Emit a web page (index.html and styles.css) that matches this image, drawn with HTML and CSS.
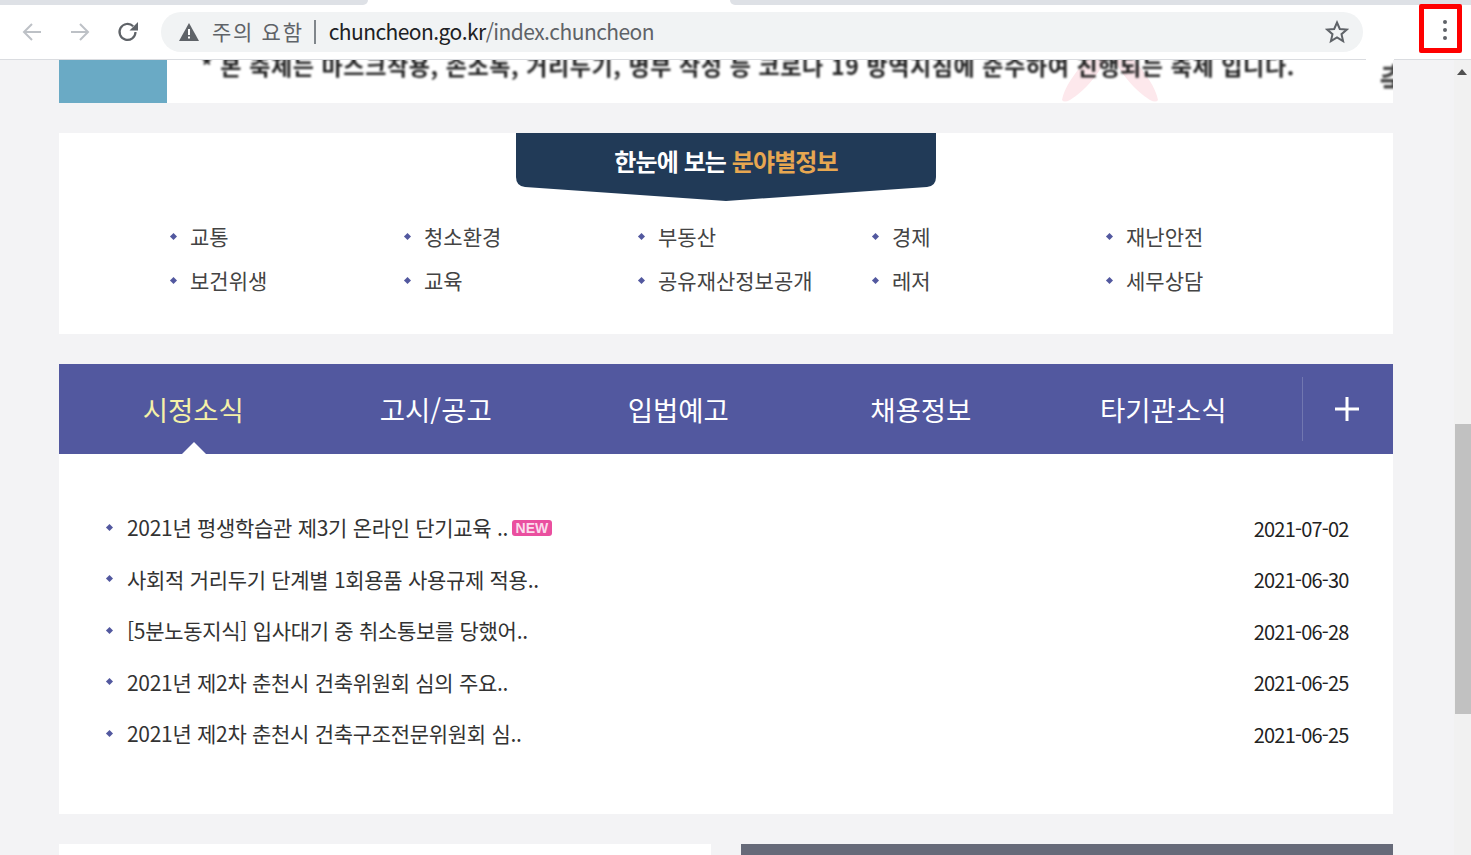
FILE: index.html
```html
<!DOCTYPE html>
<html lang="ko">
<head>
  <meta charset="UTF-8" />
  <title>춘천시청</title>
  <link rel="stylesheet" href="styles.css">
</head>
<body>

  <div class="tabstrip">
    <div class="tab-off tab-left"></div>
    <div class="tab-on"></div>
    <div class="tab-off tab-right"></div>
  </div>

  <div class="toolbar">
    <div class="nav-btn">
      <svg width="24" height="24" viewBox="0 0 24 24"><path d="M21 12H5M12 4l-8 8 8 8" fill="none" stroke="#bdc1c6" stroke-width="2"/></svg>
    </div>
    <div class="nav-btn">
      <svg width="24" height="24" viewBox="0 0 24 24"><path d="M3 12h16M12 4l8 8-8 8" fill="none" stroke="#bdc1c6" stroke-width="2"/></svg>
    </div>
    <div class="nav-btn">
      <svg width="24" height="24" viewBox="0 0 24 24"><path d="M19.500 12a8 8 0 1 1-2.300-5.700" fill="none" stroke="#5f6368" stroke-width="2.200"/><path d="M22 2v8.500h-8.500z" fill="#5f6368"/></svg>
    </div>
    <div class="address">
      <svg class="warn" width="20" height="18" viewBox="0 0 20 18"><path d="M10 0l10 18H0z" fill="#5f6368"/><path d="M9 6h2v6H9zM9 13.500h2v2H9z" fill="#fff"/></svg>
      <span class="warn-text">주의 요함</span>
      <span class="sep"></span>
      <span class="url">chuncheon.go.kr<span class="url-path">/index.chuncheon</span></span>
      <svg class="star" width="24" height="24" viewBox="0 0 24 24"><path d="M12 2.500l2.800 6.500 7 .6-5.300 4.600 1.600 6.900-6.100-3.700-6.100 3.700 1.600-6.900-5.300-4.600 7-.6z" fill="none" stroke="#5f6368" stroke-width="2"/></svg>
    </div>
  </div>

  <div class="menu-mark">
    <i></i><i></i><i></i>
  </div>

  <div class="viewport">
    <div class="page">

      <div class="banner">
        <div class="banner-blue"></div>
        <svg class="banner-ribbon" width="96" height="43" viewBox="0 0 96 43"><path d="M0 40C2 28 12 14 24 0H44C36 14 24 30 8 40Q2 43 0 40ZM96 40C94 28 84 14 72 0H52C60 14 72 30 88 40Q94 43 96 40Z" fill="#fde8ec"/></svg>
        <div class="banner-text">* 본 축제는 마스크착용, 손소독, 거리두기, 명부 작성 등 코로나 19 방역지침에 준수하여 진행되는 축제 입니다.</div>
        <div class="banner-edge">축</div>
      </div>

      <section class="fields">
        <h2 class="fields-title">한눈에 보는 <em>분야별정보</em></h2>
        <ul class="fields-list">
          <li>교통</li>
          <li>청소환경</li>
          <li>부동산</li>
          <li>경제</li>
          <li>재난안전</li>
          <li>보건위생</li>
          <li>교육</li>
          <li>공유재산정보공개</li>
          <li>레저</li>
          <li>세무상담</li>
        </ul>
      </section>

      <div class="news-tabs">
        <div class="news-tab active">시정소식</div>
        <div class="news-tab">고시/공고</div>
        <div class="news-tab">입법예고</div>
        <div class="news-tab">채용정보</div>
        <div class="news-tab">타기관소식</div>
        <div class="news-more">
          <svg width="26" height="26" viewBox="0 0 26 26"><path d="M13 1v24M1 13h24" stroke="#fff" stroke-width="3"/></svg>
        </div>
      </div>

      <ul class="news-list">
        <li><span class="news-title">2021년 평생학습관 제3기 온라인 단기교육 ..<b class="new-badge">NEW</b></span><span class="news-date">2021-07-02</span></li>
        <li><span class="news-title">사회적 거리두기 단계별 1회용품 사용규제 적용..</span><span class="news-date">2021-06-30</span></li>
        <li><span class="news-title">[5분노동지식] 입사대기 중 취소통보를 당했어..</span><span class="news-date">2021-06-28</span></li>
        <li><span class="news-title">2021년 제2차 춘천시 건축위원회 심의 주요..</span><span class="news-date">2021-06-25</span></li>
        <li><span class="news-title">2021년 제2차 춘천시 건축구조전문위원회 심..</span><span class="news-date">2021-06-25</span></li>
      </ul>

      <div class="bottom-cards">
        <div class="card-white"></div>
        <div class="card-dark"></div>
      </div>

    </div>

    <div class="scrollbar">
      <div class="scroll-up"></div>
      <div class="scroll-thumb"></div>
    </div>
  </div>

</body>
</html>
```

FILE: styles.css
```css
html, body {
  height: 100%;
  overflow: hidden;
}

body {
  margin: 0;
  font-family: "Noto Sans CJK KR", "Noto Sans", sans-serif;
  background-color: #f3f3f5;
  color: #333;
}

ul {
  margin: 0;
  padding: 0;
  list-style: none;
}

/* browser chrome */
.tabstrip {
  display: flex;
  height: 5px;
  background-color: #fff;
}

.tab-off {
  background-color: #dee1e6;
}

.tab-left {
  width: 368px;
  border-bottom-right-radius: 6px;
}

.tab-on {
  width: 362px;
}

.tab-right {
  flex: 1;
  border-bottom-left-radius: 6px;
}

.toolbar {
  display: flex;
  align-items: center;
  height: 54px;
  padding-left: 8px;
  background-color: #fff;
  border-bottom: 1px solid #dadce0;
  border-image: linear-gradient(to right, #dadce0 1365px, #fff 1365px, #fff 1393px, #dadce0 1393px) 1;
}

.nav-btn {
  display: flex;
  justify-content: center;
  width: 48px;
}

.address {
  display: flex;
  align-items: center;
  width: 1202px;
  height: 40px;
  margin-left: 9px;
  padding-left: 18px;
  box-sizing: border-box;
  background-color: #f1f3f4;
  border-radius: 20px;
  font-size: 21px;
  white-space: nowrap;
}

.warn-text {
  margin: 0 0 2px 13px;
  color: #5f6368;
  font-size: 21px;
  letter-spacing: 1.700px;
}

.sep {
  width: 2px;
  height: 24px;
  margin: 0 13px 0 10px;
  background-color: #80868b;
}

.url {
  margin-bottom: 2px;
  color: #202124;
  letter-spacing: -0.560px;
}

.url-path {
  color: #5f6368;
}

.star {
  margin-left: auto;
  margin-right: 14px;
}

.menu-mark {
  position: absolute;
  top: 4px;
  left: 1419px;
  width: 24px;
  height: 36px;
  padding: 3px 0 0 9px;
  border: 5px solid #f00;
  border-radius: 2px;
  background-color: #fff;
  display: flex;
  flex-direction: column;
  align-items: center;
  justify-content: center;
  gap: 4px;
}

.menu-mark i {
  width: 4px;
  height: 4px;
  border-radius: 50%;
  background-color: #5f6368;
}

/* page area */
.viewport {
  display: flex;
  height: 795px;
}

.page {
  flex: 1;
  overflow: hidden;
  padding: 0 61px 0 59px;
}

.scrollbar {
  width: 17px;
  background-color: #f1f1f1;
}

.scroll-up {
  width: 0;
  height: 0;
  margin: 9px 0 0 3px;
  border-left: 5px solid transparent;
  border-right: 5px solid transparent;
  border-bottom: 6px solid #505050;
}

.scroll-thumb {
  height: 290px;
  margin: 349px 0 0 1px;
  background-color: #c1c1c1;
}

/* festival banner, cut by the toolbar */
.banner {
  position: relative;
  display: flex;
  height: 43px;
  overflow: hidden;
  background-color: #fff;
}

.banner-blue {
  flex: none;
  width: 108px;
  background-color: #6aaac5;
}

.banner-ribbon {
  position: absolute;
  top: 0;
  left: 1003px;
}

.banner-text {
  position: relative;
  margin: -9px 0 0 34px;
  font-size: 23px;
  font-weight: 700;
  line-height: 28px;
  letter-spacing: 0.620px;
  white-space: nowrap;
  color: #222;
  filter: blur(0.8px);
}

.banner-edge {
  position: absolute;
  top: -6px;
  right: -16px;
  font-size: 32px;
  font-weight: 700;
  line-height: 46px;
  color: #444;
  filter: blur(0.8px);
}

/* fields */
.fields {
  margin-top: 30px;
  padding-bottom: 32px;
  background-color: #fff;
}

.fields-title {
  width: 420px;
  height: 68px;
  margin: 0 auto;
  padding-top: 10px;
  box-sizing: border-box;
  background-color: #213a57;
  clip-path: path("M0 0H420V44Q420 53 411 54L210 68L9 54Q0 53 0 44Z");
  color: #fff;
  font-size: 24px;
  font-weight: 700;
  line-height: 36px;
  letter-spacing: -0.900px;
  text-align: center;
}

.fields-title em {
  font-style: normal;
  color: #e7a751;
}

.fields-list {
  display: grid;
  grid-template-columns: repeat(5, 234px);
  grid-auto-rows: 44px;
  margin-top: 13px;
  padding-left: 111px;
}

.fields-list li {
  display: flex;
  align-items: center;
  font-size: 21px;
  color: #444;
}

.fields-list li::before,
.news-title::before {
  content: "";
  flex: none;
  width: 5px;
  height: 5px;
  margin: 0 14px 0 1px;
  background-color: #52589f;
  transform: rotate(45deg);
}

/* news */
.news-tabs {
  display: flex;
  height: 90px;
  margin-top: 30px;
  padding-left: 13px;
  background-color: #52589f;
}

.news-tab {
  position: relative;
  display: flex;
  align-items: center;
  justify-content: center;
  width: 242.500px;
  color: #fff;
  font-size: 27.500px;
}

.news-tab.active {
  color: #f5f1a8;
}

.news-tab.active::after {
  content: "";
  position: absolute;
  bottom: 0;
  left: 110px;
  border-left: 12px solid transparent;
  border-right: 12px solid transparent;
  border-bottom: 12px solid #fff;
}

.news-more {
  display: flex;
  align-items: center;
  justify-content: center;
  width: 89px;
  height: 64px;
  margin: 13px 0 0 17px;
  border-left: 1px solid #7177b0;
}

.news-list {
  height: 311.300px;
  padding: 48.700px 44.500px 0 46px;
  background-color: #fff;
}

.news-list li {
  display: flex;
  align-items: center;
  justify-content: space-between;
  height: 51.500px;
  font-size: 21px;
  color: #333;
}

.news-title {
  display: flex;
  align-items: center;
  margin-bottom: 2px;
  white-space: pre;
  letter-spacing: -0.300px;
}

.news-title::before {
  margin: 0 15px 0 2px;
}

.news-date {
  color: #222;
  font-size: 20px;
  letter-spacing: -0.800px;
}

.new-badge {
  margin: 2px 0 0 4px;
  padding: 0 3.500px;
  height: 16px;
  border-radius: 3px;
  background-color: #ea4f9f;
  color: #fbdcec;
  font-family: "Liberation Sans", sans-serif;
  font-size: 14px;
  line-height: 16px;
  letter-spacing: 0;
}

.bottom-cards {
  display: grid;
  grid-template-columns: 652px 652px;
  gap: 30px;
  margin-top: 30px;
}

.card-white {
  height: 60px;
  background-color: #fff;
}

.card-dark {
  height: 60px;
  background-color: #666a79;
}
```
